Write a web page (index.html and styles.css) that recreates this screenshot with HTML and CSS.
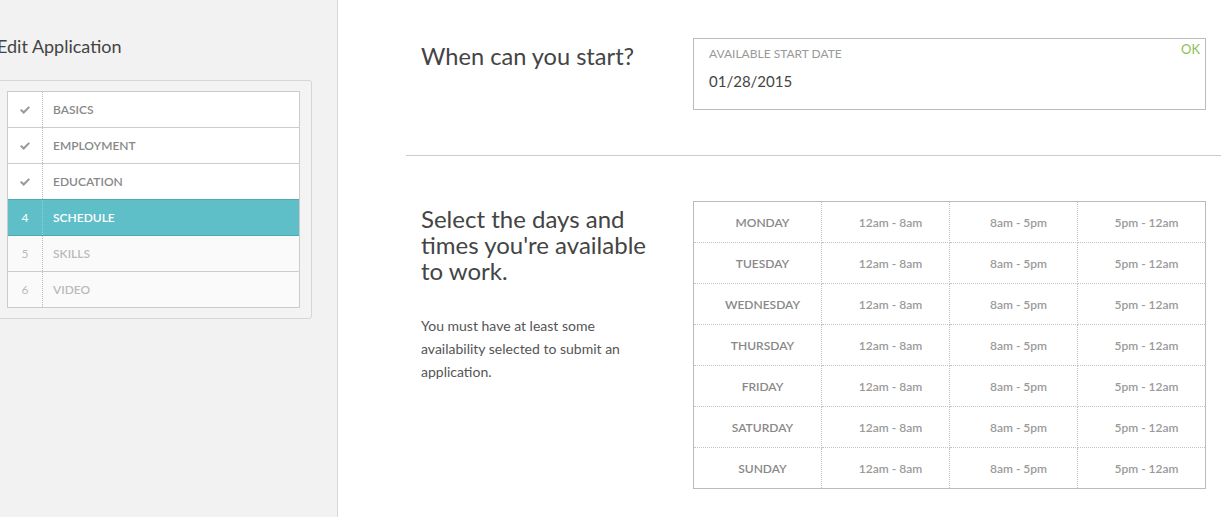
FILE: index.html
```html
<!DOCTYPE html>
<html lang="en">
<head>
    <meta charset="UTF-8">
    <title>Edit Application - Schedule</title>
    <link rel="stylesheet" href="styles.css">
</head>
<body>
    <div class="page">
        <aside class="sidebar">
            <h2 class="sidebar-title">Edit Application</h2>
            <div class="steps-panel">
                <ul class="steps">
                    <li class="step done"><span class="step-num"><svg width="10" height="8" viewBox="0 0 10 8"><path d="M0 4.3 L1.4 2.9 L3.7 5.1 L8.6 0.2 L10 1.6 L3.7 7.9 Z" fill="#999"/></svg></span><span class="step-name">Basics</span></li>
                    <li class="step done"><span class="step-num"><svg width="10" height="8" viewBox="0 0 10 8"><path d="M0 4.3 L1.4 2.9 L3.7 5.1 L8.6 0.2 L10 1.6 L3.7 7.9 Z" fill="#999"/></svg></span><span class="step-name">Employment</span></li>
                    <li class="step done"><span class="step-num"><svg width="10" height="8" viewBox="0 0 10 8"><path d="M0 4.3 L1.4 2.9 L3.7 5.1 L8.6 0.2 L10 1.6 L3.7 7.9 Z" fill="#999"/></svg></span><span class="step-name">Education</span></li>
                    <li class="step active"><span class="step-num">4</span><span class="step-name">Schedule</span></li>
                    <li class="step todo"><span class="step-num">5</span><span class="step-name">Skills</span></li>
                    <li class="step todo"><span class="step-num">6</span><span class="step-name">Video</span></li>
                </ul>
            </div>
        </aside>

        <main class="main">
            <section class="section start-section">
                <h1 class="section-title">When can you start?</h1>
                <div class="field">
                    <label class="field-label">Available Start Date</label>
                    <div class="field-value">01/28/2015</div>
                    <span class="field-ok">OK</span>
                </div>
            </section>

            <section class="section schedule-section">
                <div class="schedule-intro">
                    <h2 class="schedule-title">Select the days and times you're available to work.</h2>
                    <p class="schedule-note">You must have at least some availability selected to submit an application.</p>
                </div>
                <table class="schedule">
                    <tbody id="scheduleBody"></tbody>
                </table>
            </section>
        </main>
    </div>

    <script>
        // build the week grid
        const days = ['Monday', 'Tuesday', 'Wednesday', 'Thursday', 'Friday', 'Saturday', 'Sunday'];
        const slots = ['12am - 8am', '8am - 5pm', '5pm - 12am'];
        const body = document.getElementById('scheduleBody');
        days.forEach(function(day) {
            const row = document.createElement('tr');
            row.innerHTML = '<th class="day">' + day + '</th>' +
                slots.map(function(s) { return '<td class="slot">' + s + '</td>'; }).join('');
            body.appendChild(row);
        });
    </script>
</body>
</html>
```

FILE: styles.css
```css
body {
    margin: 0;
    font-family: Lato, "Open Sans", Arial, sans-serif;
    color: #444;
    background-color: #fff;
    overflow: hidden;
}
.page {
    display: flex;
    height: 517px;
}

/* sidebar */
.sidebar {
    width: 337px;
    flex-shrink: 0;
    background-color: #f2f2f2;
    border-right: 1px solid #d8d8d8;
}
.sidebar-title {
    margin: 34px 0 0 -3px;
    font-size: 18px;
    font-weight: normal;
    line-height: 24px;
    color: #444;
}
.steps-panel {
    margin: 22px 25px 0 -4px;
    padding: 10px 11px 10px 10px;
    background-color: #f3f3f3;
    border: 1px solid #d6d6d6;
    border-radius: 0 3px 3px 0;
}
.steps {
    list-style: none;
    margin: 0;
    padding: 0;
    border: 1px solid #ccc;
}
.step {
    display: flex;
    align-items: center;
    height: 35px;
    border-top: 1px solid #ccc;
    background-color: #fff;
    font-size: 12px;
    font-weight: 600;
    text-transform: uppercase;
    color: #888;
}
.step:first-child {
    border-top: none;
}
.step-num {
    width: 34px;
    height: 100%;
    display: flex;
    align-items: center;
    justify-content: center;
    border-right: 1px dotted #bbb;
    font-weight: normal;
}
.step-name {
    padding-left: 10px;
}
.step.active {
    background-color: #5ebfc9;
    border-top-color: #4fa9b3;
    color: #fff;
}
.step.active .step-num {
    border-right-color: #8fd3da;
}
.step.todo {
    background-color: #fafafa;
    color: #bbb;
}
.step.active + .step {
    border-top-color: #4fa9b3;
}

/* main */
.main {
    flex: 1;
    padding: 0 5px 0 68px;
}
.section {
    display: flex;
    padding: 0 15px;
}
.start-section {
    padding-top: 38px;
    padding-bottom: 45px;
    border-bottom: 1px solid #ccc;
}
.section-title {
    width: 240px;
    margin: 3px 32px 0 0;
    font-size: 23.6px;
    font-weight: normal;
    line-height: 30px;
    color: #444;
}
.field {
    position: relative;
    width: 511px;
    height: 70px;
    border: 1px solid #bbb;
}
.field-label {
    display: block;
    margin-top: 8px;
    padding-left: 15px;
    font-size: 12px;
    line-height: 14px;
    text-transform: uppercase;
    color: #999;
}
.field-value {
    margin-top: 11px;
    padding-left: 15px;
    font-size: 15px;
    line-height: 18px;
    color: #444;
}
.field-ok {
    position: absolute;
    top: 2px;
    right: 5px;
    font-size: 13px;
    color: #8cc152;
}

.schedule-section {
    padding-top: 45px;
}
.schedule-intro {
    width: 240px;
    margin-right: 32px;
}
.schedule-title {
    margin: 5px 0 0 0;
    font-size: 24px;
    font-weight: normal;
    line-height: 26px;
    color: #444;
}
.schedule-note {
    margin: 30px 0 0 0;
    font-size: 14px;
    line-height: 23px;
    color: #555;
}
.schedule {
    width: 513px;
    border-collapse: collapse;
    border: 1px solid #bbb;
    table-layout: fixed;
}
.schedule th,
.schedule td {
    height: 40px;
    padding: 0 0 0 10px;
    text-align: center;
    font-size: 12px;
    font-weight: 600;
    border: 1px dotted #c4c4c4;
}
.schedule tr:first-child th,
.schedule tr:first-child td {
    border-top: 1px solid #bbb;
}
.schedule tr:last-child th,
.schedule tr:last-child td {
    border-bottom: 1px solid #bbb;
}
.schedule th:first-child {
    border-left: 1px solid #bbb;
}
.schedule td:last-child {
    border-right: 1px solid #bbb;
}
.day {
    text-transform: uppercase;
    color: #888;
}
.slot {
    color: #9a9a9a;
}
```
